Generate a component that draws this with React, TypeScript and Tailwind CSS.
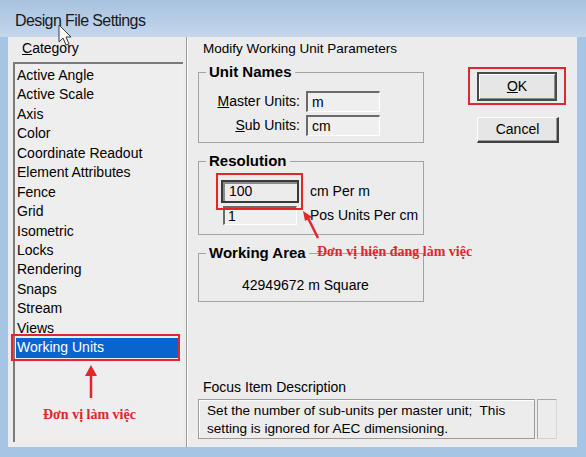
import React from "react";

const categories = [
  "Active Angle",
  "Active Scale",
  "Axis",
  "Color",
  "Coordinate Readout",
  "Element Attributes",
  "Fence",
  "Grid",
  "Isometric",
  "Locks",
  "Rendering",
  "Snaps",
  "Stream",
  "Views",
];

const sunken =
  "border-t-2 border-l-2 border-b border-r border-t-[#6a6a6a] border-l-[#6a6a6a] border-b-white border-r-white bg-[#efefef]";

const App: React.FC = () => {
  return (
    <div className="relative w-[586px] h-[457px] overflow-hidden bg-[#a6c4e4] font-['Liberation_Sans',Arial,sans-serif] text-black">
      {/* Title bar */}
      <div className="h-[37px] bg-gradient-to-b from-[#a8c2df] to-[#c4d7eb] pl-[15px] pt-[11px] text-[16px] leading-[20px] tracking-[-0.6px] text-[#16191d]">
        Design File Settings
      </div>

      {/* Client area */}
      <div className="flex h-[410px] ml-[8px] mr-[9px] bg-[#ececec]">
        {/* Left - Category */}
        <div className="w-[178px] flex flex-col">
          <div className="pl-[14px] pt-[3px] text-[14px] leading-[16px]">
            <span className="underline">C</span>ategory
          </div>
          <div className="ml-[5px] mt-[6px] w-[170px] h-[380px] border-t-2 border-l-2 border-[#7a7a7a] bg-[#eeeeee] pt-[2px] text-[14px]">
            {categories.map((c) => (
              <div key={c} className="h-[19.45px] leading-[19.45px] pl-[2px]">
                {c}
              </div>
            ))}
            <div className="relative h-[19.45px] leading-[19.45px] ml-[1px] mr-[5px] pl-[1px] bg-[#0a64d0] text-white">
              Working Units
              <div className="absolute -left-[5px] -right-[2px] -top-[4px] -bottom-[3px] border-2 border-[#e3262c]" />
            </div>
          </div>
        </div>

        {/* Divider */}
        <div className="w-[1px] bg-[#9a9a9a]" />
        <div className="w-[1px] bg-white" />

        {/* Right - parameters */}
        <div className="flex-1 flex flex-col">
          <div className="flex">
            <div className="pl-[10px] w-[236px]">
              <div className="pl-[5px] pt-[4px] text-[13.5px] leading-[16px]">
                Modify Working Unit Parameters
              </div>

              {/* Unit Names */}
              <fieldset className="mt-[6px] border border-[#a3a3a3] pt-[10px] pb-[6px]">
                <legend className="ml-[7px] px-[3px] text-[15px] font-bold leading-[18px]">
                  Unit Names
                </legend>
                <div className="grid grid-cols-[101px_74px] gap-x-[6px] gap-y-[3px] items-center text-[14px]">
                  <div className="text-right">
                    <span className="underline">M</span>aster Units:
                  </div>
                  <div className={`h-[21px] pl-[4px] leading-[18px] ${sunken}`}>m</div>
                  <div className="text-right">
                    <span className="underline">S</span>ub Units:
                  </div>
                  <div className={`h-[21px] pl-[4px] leading-[18px] ${sunken}`}>cm</div>
                </div>
              </fieldset>

              {/* Resolution */}
              <fieldset className="mt-[9px] border border-[#a3a3a3] pt-[10px] pb-[8px] text-[14px]">
                <legend className="ml-[7px] px-[3px] text-[15px] font-bold leading-[18px]">
                  Resolution
                </legend>
                <div className="flex items-center">
                  <div className="relative ml-[22px] w-[78px] h-[23px]">
                    <div className="h-full border-2 border-[#3a3a3a] bg-[#ececec] shadow-[inset_2px_2px_0_#8a8a8a] pl-[6px] leading-[19px]">
                      100
                    </div>
                    <div className="absolute -left-[5px] -right-[4px] -top-[7px] -bottom-[7px] border-2 border-[#e3262c]" />
                  </div>
                  <div className="ml-[11px]">cm Per m</div>
                </div>
                <div className="flex items-center mt-[2px]">
                  <div className={`ml-[24px] w-[74px] h-[19px] pl-[3px] leading-[16px] ${sunken}`}>1</div>
                  <div className="ml-[13px]">Pos Units Per cm</div>
                </div>
              </fieldset>

              {/* Working Area */}
              <fieldset className="mt-[9px] border border-[#a3a3a3] pt-[15px] pb-[8px] text-[14px]">
                <legend className="ml-[7px] px-[3px] text-[15px] font-bold leading-[18px]">
                  Working Area
                </legend>
                <div className="pl-[43px] leading-[16px]">42949672 m Square</div>
              </fieldset>
            </div>

            {/* Buttons */}
            <div className="ml-[53px] flex flex-col text-[14px]">
              <div className="relative mt-[35px] w-[80px] h-[29px]">
                <div className="h-full border-2 border-[#4a4a4a] bg-[#e6e6e6] shadow-[inset_1px_1px_0_#fff,inset_-1px_-1px_0_#8a8a8a] flex items-center justify-center">
                  <span className="underline">O</span>K
                </div>
                <div className="absolute -left-[9px] -right-[9px] -top-[5px] -bottom-[4px] border-2 border-[#e3262c]" />
              </div>
              <div className="mt-[16px] w-[82px] h-[26px] border-t border-l border-b-2 border-r-2 border-t-white border-l-white border-b-[#404040] border-r-[#404040] bg-[#e6e6e6] shadow-[inset_-1px_-1px_0_#9a9a9a] flex items-center justify-center">
                Cancel
              </div>
            </div>
          </div>

          {/* Focus item description */}
          <div className="mt-auto pb-[8px]">
            <div className="pl-[15px] text-[14px] leading-[16px]">Focus Item Description</div>
            <div className="flex mt-[4px] ml-[10px]">
              <div className="w-[337px] h-[40px] border border-[#9c9c9c] shadow-[inset_1px_1px_0_#fff] pl-[8px] pt-[2px] text-[13.6px] leading-[18px]">
                Set the number of sub-units per master unit;&nbsp; This
                <br />
                setting is ignored for AEC dimensioning.
              </div>
              <div className="ml-[2px] w-[20px] h-[40px] border border-[#a8a8a8] border-r-[#d8d8d8] border-b-[#d0d0d0]" />
            </div>
          </div>
        </div>
      </div>

      {/* Mouse cursor */}
      <svg className="absolute left-[58px] top-[24px]" width="16" height="24" viewBox="0 0 16 24">
        <path d="M1 1 L1 18 L5 14 L8 21 L11 20 L8 13 L13 13 Z" fill="#fafafa" stroke="#3a3a3a" strokeWidth="1" />
      </svg>

      {/* Annotation: category arrow */}
      <svg className="absolute left-[82px] top-[362px]" width="18" height="38" viewBox="0 0 18 38">
        <line x1="9" y1="12" x2="9" y2="36" stroke="#e3262c" strokeWidth="2.5" />
        <path d="M3 14 L9 3 L15 14 Z" fill="#e3262c" />
      </svg>
      <div className="absolute left-[43px] top-[405px] font-['Liberation_Serif',serif] font-bold text-[14px] leading-[20px] text-[#e0262b]">
        Đơn vị làm việc
      </div>

      {/* Annotation: resolution arrow */}
      <svg className="absolute left-[300px] top-[206px]" width="24" height="36" viewBox="0 0 24 36">
        <line x1="18" y1="32" x2="8" y2="12" stroke="#e3262c" strokeWidth="2.5" />
        <path d="M3 5 L12 11 L5 15 Z" fill="#e3262c" />
      </svg>
      <div className="absolute left-[317px] top-[242px] font-['Liberation_Serif',serif] font-bold text-[14px] leading-[20px] text-[#e0262b]">
        Đơn vị hiện đang làm việc
      </div>
    </div>
  );
};

export default App;
